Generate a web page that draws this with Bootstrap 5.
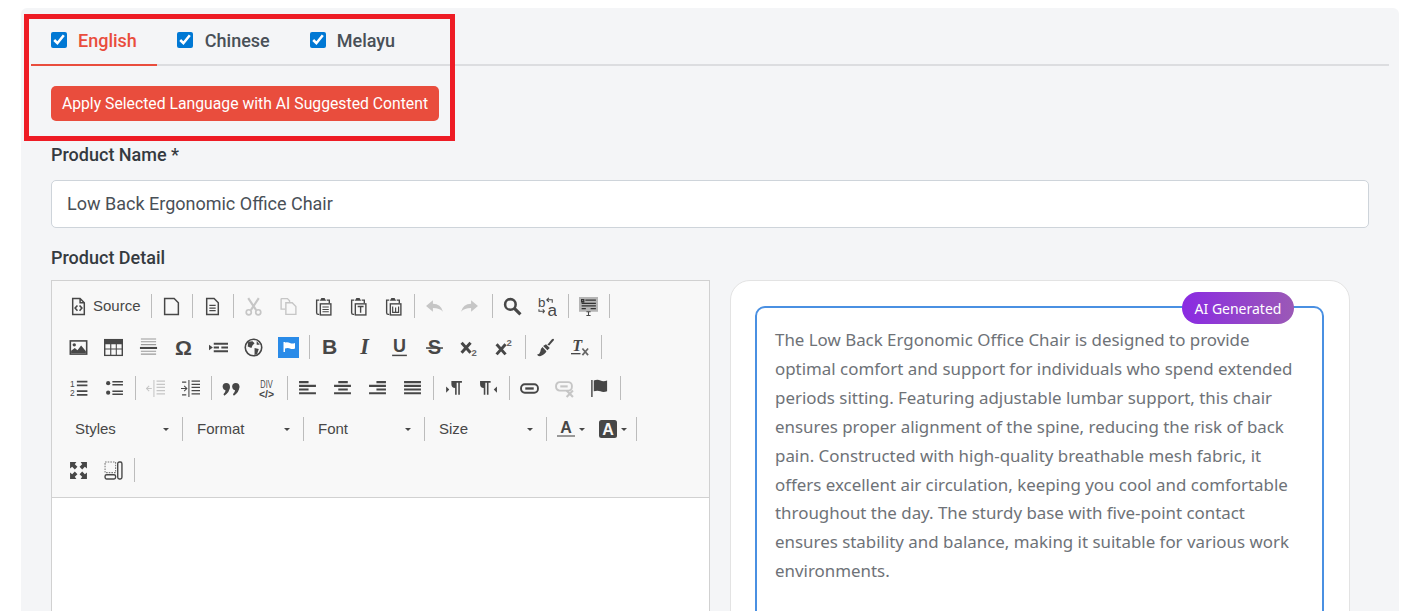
<!DOCTYPE html>
<html lang="en">
<head>
    <meta charset="UTF-8">
    <meta name="viewport" content="width=device-width, initial-scale=1.0">
    <title>Product Detail</title>
    <link href="https://cdn.jsdelivr.net/npm/bootstrap@5.3.0/dist/css/bootstrap.min.css" rel="stylesheet">
    <style>
        html, body { height: 611px; overflow: hidden; background: #fff; }
        body { font-family: Roboto, "Liberation Sans", sans-serif; color: #343a40; }
        .page-wrap { padding: 8px 9px 0 21px; position: relative; height: 611px; overflow: hidden; }
        .panel-box { background: #f4f5f7; border-radius: 6px 6px 0 0; padding: 0 10px; height: 603px; overflow: hidden; }

        .lang-tabs { border-bottom: 2px solid #dcdde0; height: 58px; }
        .lang-tab { display: flex; align-items: center; gap: 10px; padding: 8px 20px 0; height: 58px; margin-bottom: -2px; font-size: 18px; font-weight: 500; color: #495057; border-bottom: 2px solid transparent; }
        .lang-tab:nth-child(2) { gap: 11px; }
        .lang-tab.on { color: #e94d3d; border-bottom-color: #e94d3d; }
        .lang-check { width: 16px; height: 16px; margin: 0 1px 0 0; accent-color: #0078d4; }
        .inner-area { padding: 20px 20px 0; }
        .btn-apply { background: #e94d3d; color: #fff; border: 0; border-radius: 5px; font-size: 15.75px; height: 35px; width: 388px; padding: 0; line-height: 35px; display: block; }
        .btn-apply:hover { background: #e94d3d; color: #fff; }
        .field-label { font-size: 18px; font-weight: 500; color: #343a40; line-height: 24px; margin: 0; }
        .name-label { margin: 22px 0 13px; }
        .detail-label { margin: 18px 0 10px; }
        .name-input { height: 48px; font-size: 18px; color: #495057; padding: 0 15px 2px; border-radius: 5px; border-color: #ced4da; }

        .red-note { position: absolute; left: 24px; top: 14px; width: 431px; height: 127px; border: 5px solid #ee1c25; pointer-events: none; }

        .cke-box { border: 1px solid #d1d1d1; background: #fff; height: 400px; }
        .cke-bar { background: #f8f8f8; border-bottom: 1px solid #d1d1d1; height: 217px; padding: 4.5px 0 0 9px; font-family: "Liberation Sans", sans-serif; font-size: 15px; color: #474747; }
        .cke-row { display: flex; align-items: center; height: 41px; }
        .cke-row.nudge { padding-left: 1px; }
        .cke-btn { width: 35px; height: 34px; flex: none; display: flex; align-items: center; justify-content: center; }
        .cke-btn svg { width: 19px; height: 19px; display: block; }
        .cke-btn.off svg { opacity: .28; }
        .cke-btn.src { width: 87px; justify-content: flex-start; padding-left: 8px; gap: 5px; }
        .cke-btn.clr { width: 42px; gap: 4px; justify-content: flex-start; padding-left: 8px; }
        .cke-btn.clr svg { width: 18px; height: 18px; }
        .cke-sep { width: 1px; height: 24px; background: #bcbcbc; margin: 0 2px 0 3px; flex: none; }
        .cke-sep.wide { margin: 0 2px 0 5px; }
        .cke-combo { display: flex; align-items: center; justify-content: space-between; flex: none; width: 115px; height: 24px; padding: 0 10px 0 12px; }
        .cke-combo.first { width: 118px; padding-left: 14px; }
        .cke-combo.last { width: 116px; }
        .cke-arrow { width: 0; height: 0; border: 3px solid transparent; border-top-color: #474747; border-bottom: 0; display: block; flex: none; }
        .flag-on { background: #2a8be8; width: 21px; height: 21px; display: flex; align-items: center; justify-content: center; }
        .flag-on svg { width: 14px; height: 14px; }

        .ai-card { background: #fff; border: 1px solid #e3e3e3; border-radius: 20px; height: 400px; padding: 25px 25px 25px 24px; margin-left: 20px; margin-right: 19px; }
        .ai-box { position: relative; border: 2px solid #4a90e2; border-radius: 10px; height: 400px; padding: 18px 18px; }
        .ai-text { font-family: "Noto Sans", sans-serif; font-size: 16.9px; line-height: 28.9px; color: #6e7277; margin: 0; }
        .ai-tag { position: absolute; top: -16px; right: 28px; height: 32px; width: 112px; border-radius: 16px; background: linear-gradient(90deg, #8a2be2, #9b59b6); color: #fff; font-family: "Noto Sans", sans-serif; font-size: 14px; display: flex; align-items: center; justify-content: center; }
    </style>
</head>
<body>
    <svg class="d-none" xmlns="http://www.w3.org/2000/svg">
        <symbol id="i-source" viewBox="0 0 18 18"><path d="M3.500 1.500h7l4 4v11h-11z M10.500 1.500v4h4" fill="none" stroke="#474747" stroke-width="1.400"/><path d="M8 8 5.800 10.500 8 13M10 8l2.200 2.500L10 13" fill="none" stroke="#474747" stroke-width="1.500"/></symbol>
        <symbol id="i-new" viewBox="0 0 18 18"><path d="M2.500 1.500h9l4 4v11h-13z" fill="none" stroke="#474747" stroke-width="1.400"/></symbol>
        <symbol id="i-preview" viewBox="0 0 18 18"><path d="M3.500 1.500h7l4 4v11h-11z" fill="none" stroke="#474747" stroke-width="1.400"/><path d="M6 8h6M6 10.500h6M6 13h6" stroke="#474747" stroke-width="1.200"/></symbol>
        <symbol id="i-cut" viewBox="0 0 18 18"><path d="M4 1l7.500 11.500M14 1 6.500 12.500" stroke="#474747" stroke-width="2" fill="none"/><circle cx="4.500" cy="14.500" r="2.400" fill="none" stroke="#474747" stroke-width="1.600"/><circle cx="13.500" cy="14.500" r="2.400" fill="none" stroke="#474747" stroke-width="1.600"/></symbol>
        <symbol id="i-copy" viewBox="0 0 18 18"><path d="M2 1.500h6l2 2v2M2 1.500v10h4" fill="none" stroke="#474747" stroke-width="1.300"/><path d="M6.500 5.500h6l3.500 3.500v7.500h-9.500z" fill="none" stroke="#474747" stroke-width="1.300"/></symbol>
        <symbol id="i-paste" viewBox="0 0 18 18"><path d="M5 3H2.500v12q0 1.500 1.500 1.500h1M12 3h2.500v3" fill="none" stroke="#474747" stroke-width="1.300"/><path d="M5.500 3.500 7 1h3l1.500 2.500z" fill="#474747"/><rect x="6" y="6.500" width="10" height="10.500" fill="none" stroke="#474747" stroke-width="1.300"/><path d="M8 9.500h6M8 11.800h6M8 14h6" stroke="#474747" stroke-width="1.100"/></symbol>
        <symbol id="i-pastet" viewBox="0 0 18 18"><path d="M5 3H2.500v12q0 1.500 1.500 1.500h1M12 3h2.500v3" fill="none" stroke="#474747" stroke-width="1.300"/><path d="M5.500 3.500 7 1h3l1.500 2.500z" fill="#474747"/><rect x="6" y="6.500" width="10" height="10.500" fill="none" stroke="#474747" stroke-width="1.300"/><path d="M8.200 9h5.600M11 9v6" stroke="#474747" stroke-width="1.300"/></symbol>
        <symbol id="i-pastew" viewBox="0 0 18 18"><path d="M5 3H2.500v12q0 1.500 1.500 1.500h1M12 3h2.500v3" fill="none" stroke="#474747" stroke-width="1.300"/><path d="M5.500 3.500 7 1h3l1.500 2.500z" fill="#474747"/><rect x="6" y="6.500" width="10" height="10.500" fill="none" stroke="#474747" stroke-width="1.300"/><path d="M8.200 9v5.500h5.600V9M11 10v4.500" fill="none" stroke="#474747" stroke-width="1.100"/></symbol>
        <symbol id="i-undo" viewBox="0 0 18 18"><path d="M1 8.500 7.500 3v3.500q7.500 0 9.500 7.500-3-3.500-9.500-3.500V14z" fill="#474747"/></symbol>
        <symbol id="i-redo" viewBox="0 0 18 18"><path d="M17 8.500 10.500 3v3.500Q3 6.500 1 14q3-3.500 9.500-3.500V14z" fill="#474747"/></symbol>
        <symbol id="i-find" viewBox="0 0 18 18"><circle cx="7" cy="7" r="5" fill="none" stroke="#474747" stroke-width="2.400"/><path d="m10.500 10.500 6 6" stroke="#474747" stroke-width="3"/></symbol>
        <symbol id="i-replace" viewBox="0 0 20 20"><text x="0" y="10" font-family="Liberation Sans" font-size="14" fill="#474747">b</text><text x="10" y="20" font-family="Liberation Sans" font-size="18" fill="#474747">a</text><path d="M9 3h6v3M9 3l2.500-2M9 3l2.500 2M1 13v2h6M7 15l-2-2M7 15l-2 2" fill="none" stroke="#474747" stroke-width="1.100"/></symbol>
        <symbol id="i-selectall" viewBox="0 0 18 18"><rect y="0" width="18" height="14" fill="#b5b5b5"/><path d="M2.500 2.500h2v2h-2zM6 3h10M2.500 6h13.500M2.500 8.500h13.500M2.500 11h4M11 11h5" stroke="#333" stroke-width="1.200" fill="none"/><path d="M7 14h4M9 14v3.500M7 17.500h4" stroke="#474747" stroke-width="1"/></symbol>
        <symbol id="i-image" viewBox="0 0 18 18"><rect x=".5" y="2" width="17" height="14" fill="#474747"/><rect x="2" y="3.500" width="14" height="11" fill="#f8f8f8"/><circle cx="5" cy="6.500" r="1.600" fill="#474747"/><path d="M2 14.500V12l3.500-2.500 2.500 2 3.500-4.500 4.500 5.500v2z" fill="#474747"/></symbol>
        <symbol id="i-table" viewBox="0 0 20 18"><rect x="0" y="0" width="20" height="18" fill="#474747"/><path d="M1.500 5.500h5v4.500h-5zM7.700 5.500h4.700v4.500H7.700zM13.500 5.500h5v4.500h-5zM1.500 11.200h5V16.500h-5zM7.700 11.200h4.700V16.500H7.700zM13.500 11.200h5V16.500h-5z" fill="#f8f8f8"/></symbol>
        <symbol id="i-hr" viewBox="0 0 18 20"><path d="M1 1h16M1 4h16M1 7h16M1 14h16M1 17h16" stroke="#999" stroke-width="1.200"/><path d="M0 10.500h18" stroke="#474747" stroke-width="2.200"/></symbol>
        <symbol id="i-omega" viewBox="0 0 18 18"><text x="9" y="16" text-anchor="middle" font-family="Liberation Sans" font-weight="700" font-size="20" fill="#474747">&#937;</text></symbol>
        <symbol id="i-break" viewBox="0 0 20 18"><path d="M0 6v6l4-3z" fill="#474747"/><path d="M5 5h15M5 9h5.500M13 9h7M5 13h15" stroke="#474747" stroke-width="2"/></symbol>
        <symbol id="i-globe" viewBox="0 0 18 18"><circle cx="9" cy="9" r="7.800" fill="none" stroke="#474747" stroke-width="1.500"/><path d="M4 3.500 8 3l2 2-2 2-1 2.500L3.500 8zM10 9.500l4 1-1.500 4.500-2.500 1zM12 2.800l3 3.500h-3z" fill="#474747"/></symbol>
        <symbol id="i-flagw" viewBox="0 0 14 14"><path d="M1.500 2v10h1.500V8.500q3-1 5 0t5 0V3q-3 1-5 0T3 2.500V2z" fill="#fff"/></symbol>
        <symbol id="i-bold" viewBox="0 0 18 18"><text x="9" y="15.500" text-anchor="middle" font-family="Liberation Sans" font-weight="700" font-size="20" fill="#474747">B</text></symbol>
        <symbol id="i-italic" viewBox="0 0 18 18"><text x="9" y="15.500" text-anchor="middle" font-family="Liberation Serif" font-weight="700" font-style="italic" font-size="21" fill="#474747">I</text></symbol>
        <symbol id="i-under" viewBox="0 0 18 18"><text x="9" y="13.500" text-anchor="middle" font-family="Liberation Sans" font-weight="700" font-size="17" fill="#474747">U</text><path d="M2 16.500h14" stroke="#474747" stroke-width="1.400"/></symbol>
        <symbol id="i-strike" viewBox="0 0 18 18"><text x="9" y="15.500" text-anchor="middle" font-family="Liberation Sans" font-weight="700" font-size="19" fill="#474747">S</text><path d="M1 9.500h16" stroke="#474747" stroke-width="1.500"/></symbol>
        <symbol id="i-sub" viewBox="0 0 18 18"><path d="M1.500 4.500 10 14M10 4.500 1.500 14" stroke="#474747" stroke-width="2.800"/><text x="11" y="17" font-family="Liberation Sans" font-size="9" font-weight="700" fill="#666">2</text></symbol>
        <symbol id="i-sup" viewBox="0 0 18 18"><path d="M1.500 6 10 15.500M10 6 1.500 15.500" stroke="#474747" stroke-width="2.800"/><text x="11" y="8" font-family="Liberation Sans" font-size="9" font-weight="700" fill="#666">2</text></symbol>
        <symbol id="i-brush" viewBox="0 0 20 20"><path d="m12 7 4.500-5.500q2-1.500 2.500.5l-5 6z" fill="#474747"/><path d="M10.500 6.500 14.500 10.500 12 13 7.500 8.500z" fill="#474747"/><path d="M6.800 9.500 11 14q-1 3-6 5-2 .5-4-1.500 3-.5 3.500-3 0-3 2.300-5z" fill="#474747"/></symbol>
        <symbol id="i-clear" viewBox="0 0 20 18"><text x="6.500" y="13" text-anchor="middle" font-family="Liberation Serif" font-weight="700" font-style="italic" font-size="17" fill="#474747">T</text><path d="M0 15.500h10" stroke="#474747" stroke-width="1.400"/><path d="m12 10 6 7M18 10l-6 7" stroke="#666" stroke-width="1.800"/></symbol>
        <symbol id="i-ol" viewBox="0 0 18 18"><text x="0" y="8" font-family="Liberation Sans" font-size="8" fill="#474747">1</text><text x="0" y="16" font-family="Liberation Sans" font-size="8" fill="#474747">2</text><path d="M6.500 2.500h10M6.500 6h10M6.500 11.500h10M6.500 15h10" stroke="#474747" stroke-width="1.600"/></symbol>
        <symbol id="i-ul" viewBox="0 0 18 18"><circle cx="3" cy="4" r="2" fill="#474747"/><circle cx="3" cy="13" r="2" fill="#474747"/><path d="M7 2.500h10M7 5.500h10M7 11.500h10M7 14.500h10" stroke="#474747" stroke-width="1.400"/></symbol>
        <symbol id="i-outdent" viewBox="0 0 18 18"><path d="M0 9h5.500M3 6.500 .5 9 3 11.500" fill="none" stroke="#474747" stroke-width="1"/><path d="M7.500 1v16" stroke="#474747" stroke-width="1"/><path d="M10 2h8M10 5h8M10 8h8M10 11h8M10 14h8" stroke="#474747" stroke-width="1.200"/></symbol>
        <symbol id="i-indent" viewBox="0 0 18 18"><path d="M0 9h5.500M3 6.500 5.500 9 3 11.500" fill="none" stroke="#474747" stroke-width="1"/><path d="M7.500 1v16" stroke="#474747" stroke-width="1"/><path d="M10 2h8M10 5h8M10 8h8M10 11h8M10 14h8M1 3h4M1 15h4" stroke="#474747" stroke-width="1.200"/></symbol>
        <symbol id="i-quote" viewBox="0 0 20 18"><circle cx="4.500" cy="7" r="3.800" fill="#474747"/><circle cx="14.500" cy="7" r="3.800" fill="#474747"/><path d="M8.300 7q0 6-5.800 9.500l-1-1.500q2.500-2.500 2.500-6zM18.300 7q0 6-5.800 9.500l-1-1.500q2.500-2.500 2.500-6z" fill="#474747"/></symbol>
        <symbol id="i-div" viewBox="0 0 18 20"><text x="9" y="9.500" text-anchor="middle" font-family="Liberation Sans" font-size="11" textLength="13" lengthAdjust="spacingAndGlyphs" fill="#474747">DIV</text><text x="9" y="19.500" text-anchor="middle" font-family="Liberation Sans" font-weight="700" font-size="11" fill="#474747">&lt;/&gt;</text></symbol>
        <symbol id="i-left" viewBox="0 0 18 18"><path d="M1 3h9M1 6.500h16M1 10h9M1 13.500h16" stroke="#474747" stroke-width="2"/></symbol>
        <symbol id="i-center" viewBox="0 0 18 18"><path d="M5 3h9M1 6.500h16M5 10h9M1 13.500h16" stroke="#474747" stroke-width="2"/></symbol>
        <symbol id="i-right" viewBox="0 0 18 18"><path d="M8 3h9M1 6.500h16M8 10h9M1 13.500h16" stroke="#474747" stroke-width="2"/></symbol>
        <symbol id="i-just" viewBox="0 0 18 18"><path d="M1 3h16M1 6.500h16M1 10h16M1 13.500h16" stroke="#474747" stroke-width="2"/></symbol>
        <symbol id="i-ltr" viewBox="0 0 18 18"><path d="M2 7v6l3-3z" fill="#474747"/><path d="M7 2h10v1.500h-2V15h-1.500V3.500H12V15h-1.500V8.500Q7 8.500 7 5z" fill="#474747"/></symbol>
        <symbol id="i-rtl" viewBox="0 0 18 18"><path d="M17 7v6l-3-3z" fill="#474747"/><path d="M1 2h10v1.500H9V15H7.500V3.500H6V15H4.500V8.500Q1 8.500 1 5z" fill="#474747"/></symbol>
        <symbol id="i-link" viewBox="0 0 18 18"><rect x="1" y="5" width="16" height="8" rx="3.500" fill="none" stroke="#474747" stroke-width="1.800"/><path d="M5 9h8" stroke="#474747" stroke-width="2.200"/></symbol>
        <symbol id="i-unlink" viewBox="0 0 18 18"><rect x="1" y="3" width="15" height="8" rx="3.500" fill="none" stroke="#474747" stroke-width="1.800"/><path d="M5 7h7" stroke="#474747" stroke-width="2"/><path d="m11 11 6 6M17 11l-6 6" stroke="#474747" stroke-width="2"/></symbol>
        <symbol id="i-anchor" viewBox="0 0 18 20"><path d="M1 1v18" stroke="#474747" stroke-width="1.500"/><path d="M3 1.500q4-1.500 7 0t7 0V13q-4 1.500-7 0t-7 0z" fill="#474747"/></symbol>
        <symbol id="i-acolor" viewBox="0 0 18 18"><text x="9" y="13" text-anchor="middle" font-family="Liberation Sans" font-weight="700" font-size="16" fill="#474747">A</text><path d="M0 16h18" stroke="#999" stroke-width="2"/></symbol>
        <symbol id="i-abg" viewBox="0 0 18 18"><rect width="18" height="18" rx="2.500" fill="#474747"/><text x="9" y="14.500" text-anchor="middle" font-family="Liberation Sans" font-weight="700" font-size="16" fill="#f8f8f8">A</text></symbol>
        <symbol id="i-max" viewBox="0 0 18 18"><path d="M1 1h6L5.500 3 8 5.500 5.500 8 3 5.500 1 7zM17 1v6l-2-1.500L12.500 8 10 5.500 12.500 3 11 1zM1 17v-6l2 1.500L5.500 10 8 12.500 5.500 15 7 17zM17 17h-6l1.500-2L10 12.500l2.500-2.500 2.500 2.500 2-1.500z" fill="#474747"/></symbol>
        <symbol id="i-blocks" viewBox="0 0 18 18"><path d="M1 1h10v10H1z" fill="none" stroke="#777" stroke-width="1" stroke-dasharray="1.500 1"/><rect x="1" y="13" width="10" height="4" rx="1.500" fill="none" stroke="#474747" stroke-width="1.300"/><rect x="13" y="1" width="4" height="16" rx="1.500" fill="none" stroke="#474747" stroke-width="1.300"/></symbol>
    </svg>

    <div class="page-wrap">
        <div class="panel-box">
            <div class="lang-tabs d-flex">
                <label class="lang-tab on"><input class="lang-check" type="checkbox" checked>English</label>
                <label class="lang-tab"><input class="lang-check" type="checkbox" checked>Chinese</label>
                <label class="lang-tab"><input class="lang-check" type="checkbox" checked>Melayu</label>
            </div>
            <div class="inner-area">
                <button type="button" class="btn btn-apply">Apply Selected Language with AI Suggested Content</button>
                <p class="field-label name-label">Product Name *</p>
                <input type="text" class="form-control name-input" value="Low Back Ergonomic Office Chair">
                <p class="field-label detail-label">Product Detail</p>
                <div class="row g-0">
                    <div class="col-6">
                        <div class="cke-box">
                            <div class="cke-bar">
                                <div class="cke-row">
                                    <span class="cke-btn src"><svg><use href="#i-source"/></svg>Source</span>
                                    <i class="cke-sep"></i>
                                    <span class="cke-btn"><svg><use href="#i-new"/></svg></span>
                                    <i class="cke-sep"></i>
                                    <span class="cke-btn"><svg><use href="#i-preview"/></svg></span>
                                    <i class="cke-sep"></i>
                                    <span class="cke-btn off"><svg><use href="#i-cut"/></svg></span>
                                    <span class="cke-btn off"><svg><use href="#i-copy"/></svg></span>
                                    <span class="cke-btn"><svg><use href="#i-paste"/></svg></span>
                                    <span class="cke-btn"><svg><use href="#i-pastet"/></svg></span>
                                    <span class="cke-btn"><svg><use href="#i-pastew"/></svg></span>
                                    <i class="cke-sep"></i>
                                    <span class="cke-btn off"><svg><use href="#i-undo"/></svg></span>
                                    <span class="cke-btn off"><svg><use href="#i-redo"/></svg></span>
                                    <i class="cke-sep wide"></i>
                                    <span class="cke-btn"><svg><use href="#i-find"/></svg></span>
                                    <span class="cke-btn"><svg><use href="#i-replace"/></svg></span>
                                    <i class="cke-sep"></i>
                                    <span class="cke-btn"><svg><use href="#i-selectall"/></svg></span>
                                    <i class="cke-sep"></i>
                                </div>
                                <div class="cke-row">
                                    <span class="cke-btn"><svg><use href="#i-image"/></svg></span>
                                    <span class="cke-btn"><svg><use href="#i-table"/></svg></span>
                                    <span class="cke-btn"><svg><use href="#i-hr"/></svg></span>
                                    <span class="cke-btn"><svg><use href="#i-omega"/></svg></span>
                                    <span class="cke-btn"><svg><use href="#i-break"/></svg></span>
                                    <span class="cke-btn"><svg><use href="#i-globe"/></svg></span>
                                    <span class="cke-btn"><span class="flag-on"><svg><use href="#i-flagw"/></svg></span></span>
                                    <i class="cke-sep"></i>
                                    <span class="cke-btn"><svg><use href="#i-bold"/></svg></span>
                                    <span class="cke-btn"><svg><use href="#i-italic"/></svg></span>
                                    <span class="cke-btn"><svg><use href="#i-under"/></svg></span>
                                    <span class="cke-btn"><svg><use href="#i-strike"/></svg></span>
                                    <span class="cke-btn"><svg><use href="#i-sub"/></svg></span>
                                    <span class="cke-btn"><svg><use href="#i-sup"/></svg></span>
                                    <i class="cke-sep"></i>
                                    <span class="cke-btn"><svg><use href="#i-brush"/></svg></span>
                                    <span class="cke-btn"><svg><use href="#i-clear"/></svg></span>
                                    <i class="cke-sep"></i>
                                </div>
                                <div class="cke-row nudge">
                                    <span class="cke-btn"><svg><use href="#i-ol"/></svg></span>
                                    <span class="cke-btn"><svg><use href="#i-ul"/></svg></span>
                                    <i class="cke-sep"></i>
                                    <span class="cke-btn off"><svg><use href="#i-outdent"/></svg></span>
                                    <span class="cke-btn"><svg><use href="#i-indent"/></svg></span>
                                    <i class="cke-sep"></i>
                                    <span class="cke-btn"><svg><use href="#i-quote"/></svg></span>
                                    <span class="cke-btn"><svg><use href="#i-div"/></svg></span>
                                    <i class="cke-sep"></i>
                                    <span class="cke-btn"><svg><use href="#i-left"/></svg></span>
                                    <span class="cke-btn"><svg><use href="#i-center"/></svg></span>
                                    <span class="cke-btn"><svg><use href="#i-right"/></svg></span>
                                    <span class="cke-btn"><svg><use href="#i-just"/></svg></span>
                                    <i class="cke-sep"></i>
                                    <span class="cke-btn"><svg><use href="#i-ltr"/></svg></span>
                                    <span class="cke-btn"><svg><use href="#i-rtl"/></svg></span>
                                    <i class="cke-sep"></i>
                                    <span class="cke-btn"><svg><use href="#i-link"/></svg></span>
                                    <span class="cke-btn off"><svg><use href="#i-unlink"/></svg></span>
                                    <span class="cke-btn"><svg><use href="#i-anchor"/></svg></span>
                                    <i class="cke-sep"></i>
                                </div>
                                <div class="cke-row">
                                    <span class="cke-combo first">Styles<i class="cke-arrow"></i></span>
                                    <i class="cke-sep"></i>
                                    <span class="cke-combo">Format<i class="cke-arrow"></i></span>
                                    <i class="cke-sep"></i>
                                    <span class="cke-combo">Font<i class="cke-arrow"></i></span>
                                    <i class="cke-sep"></i>
                                    <span class="cke-combo last">Size<i class="cke-arrow"></i></span>
                                    <i class="cke-sep"></i>
                                    <span class="cke-btn clr"><svg><use href="#i-acolor"/></svg><i class="cke-arrow"></i></span>
                                    <span class="cke-btn clr"><svg><use href="#i-abg"/></svg><i class="cke-arrow"></i></span>
                                    <i class="cke-sep"></i>
                                </div>
                                <div class="cke-row">
                                    <span class="cke-btn"><svg><use href="#i-max"/></svg></span>
                                    <span class="cke-btn"><svg><use href="#i-blocks"/></svg></span>
                                    <i class="cke-sep"></i>
                                </div>
                            </div>
                        </div>
                    </div>
                    <div class="col-6">
                        <div class="ai-card">
                            <div class="ai-box">
                                <span class="ai-tag">AI Generated</span>
                                <p class="ai-text">The Low Back Ergonomic Office Chair is designed to provide optimal comfort and support for individuals who spend extended periods sitting. Featuring adjustable lumbar support, this chair ensures proper alignment of the spine, reducing the risk of back pain. Constructed with high-quality breathable mesh fabric, it offers excellent air circulation, keeping you cool and comfortable throughout the day. The sturdy base with five-point contact ensures stability and balance, making it suitable for various work environments.</p>
                            </div>
                        </div>
                    </div>
                </div>
            </div>
        </div>
        <div class="red-note"></div>
    </div>

    <script src="https://cdn.jsdelivr.net/npm/bootstrap@5.3.0/dist/js/bootstrap.bundle.min.js"></script>
</body>
</html>
